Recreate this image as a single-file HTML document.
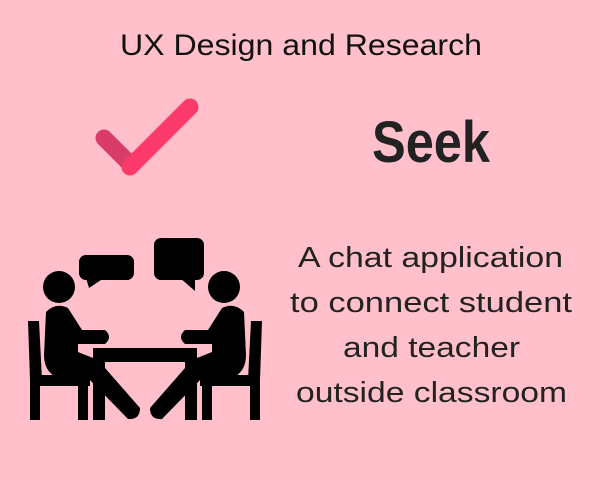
<!DOCTYPE html>
<html><head><style>
html,body{margin:0;padding:0;background:#ffc0cb;width:600px;height:480px;overflow:hidden}
</style></head><body>
<svg width="600" height="480" viewBox="0 0 600 480" xmlns="http://www.w3.org/2000/svg">
<rect width="600" height="480" fill="#ffc0cb"/>
<text x="120" y="55" font-family="Liberation Sans, DejaVu Sans, sans-serif" font-size="30" fill="#111" textLength="362" lengthAdjust="spacingAndGlyphs">UX Design and Research</text>
<g transform="translate(372,162) scale(1,1.16)">
<text x="0" y="0" font-family="Liberation Sans, sans-serif" font-weight="bold" font-size="50" fill="#222" textLength="118" lengthAdjust="spacingAndGlyphs">Seek</text>
</g>
<g font-family="Liberation Sans, DejaVu Sans, sans-serif" font-size="29" fill="#222">
<text x="298" y="267" textLength="265" lengthAdjust="spacingAndGlyphs">A chat application</text>
<text x="290" y="312" textLength="282" lengthAdjust="spacingAndGlyphs">to connect student</text>
<text x="343" y="357" textLength="177" lengthAdjust="spacingAndGlyphs">and teacher</text>
<text x="296" y="402" textLength="271" lengthAdjust="spacingAndGlyphs">outside classroom</text>
</g>
<!-- check -->
<line x1="104" y1="138" x2="128" y2="162" stroke="#d93c6a" stroke-width="17" stroke-linecap="round"/>
<line x1="130" y1="167" x2="190" y2="107" stroke="#fb3a69" stroke-width="17" stroke-linecap="round"/>
<!-- people icon -->
<g fill="#000">
<circle cx="59" cy="287" r="16"/>
<circle cx="224" cy="287" r="16"/>
<rect x="79" y="255" width="55" height="25" rx="7"/>
<path d="M86 278 L89 288 L104 278 Z"/>
<rect x="154" y="238" width="50" height="42" rx="7"/>
<path d="M180 278 L195 291 L195 278 Z"/>
<!-- table -->
<rect x="93" y="348" width="104" height="14"/>
<rect x="93" y="360" width="12" height="60"/>
<rect x="185" y="360" width="12" height="60"/>
<!-- left chair -->
<path d="M28 321 L39 321 L42 380 L30 380 Z"/>
<rect x="30" y="375" width="60" height="11"/>
<rect x="30" y="380" width="10" height="40"/>
<rect x="78" y="380" width="10" height="40"/>
<!-- left body -->
<path d="M46 312 Q56 302 68 308 L82 330 L105 330 Q113 337 105 344 L78 344 L78 352 L98 360 L140 408 Q140 420 128 419 L88 378 L58 378 Q44 372 44 355 Z"/>
<!-- right chair -->
<path d="M262 321 L251 321 L248 380 L260 380 Z"/>
<rect x="200" y="375" width="60" height="11"/>
<rect x="250" y="380" width="10" height="40"/>
<rect x="202" y="380" width="10" height="40"/>
<!-- right body -->
<path d="M244 312 Q234 302 222 308 L208 330 L185 330 Q177 337 185 344 L212 344 L212 352 L192 360 L150 408 Q150 420 162 419 L202 378 L232 378 Q246 372 246 355 Z"/>
</g>
</svg>
</body></html>
